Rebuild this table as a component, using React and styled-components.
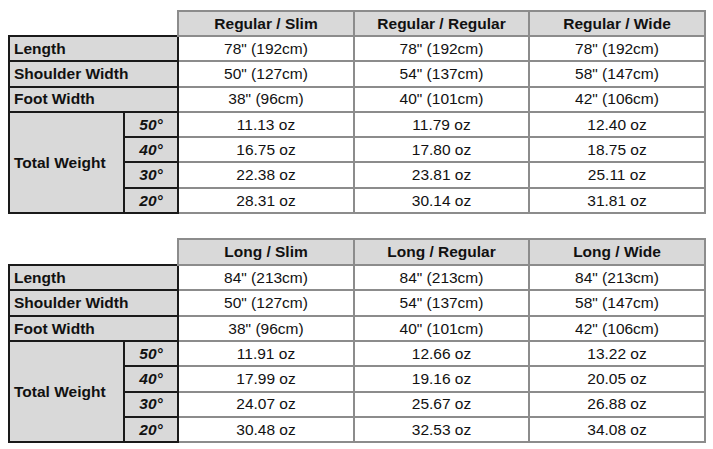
import React from 'react'
import styled, { createGlobalStyle } from 'styled-components'

const GlobalStyle = createGlobalStyle`
  html, body {
    margin: 0;
    padding: 0;
    background: #ffffff;
  }
  body {
    font-family: "Liberation Sans", Arial, sans-serif;
    color: #111;
  }
`

const tables = [
    {
        columns: ['Regular / Slim', 'Regular / Regular', 'Regular / Wide'],
        length: ['78" (192cm)', '78" (192cm)', '78" (192cm)'],
        shoulder: ['50" (127cm)', '54" (137cm)', '58" (147cm)'],
        foot: ['38" (96cm)', '40" (101cm)', '42" (106cm)'],
        weights: [
            ['50°', '11.13 oz', '11.79 oz', '12.40 oz'],
            ['40°', '16.75 oz', '17.80 oz', '18.75 oz'],
            ['30°', '22.38 oz', '23.81 oz', '25.11 oz'],
            ['20°', '28.31 oz', '30.14 oz', '31.81 oz'],
        ],
    },
    {
        columns: ['Long / Slim', 'Long / Regular', 'Long / Wide'],
        length: ['84" (213cm)', '84" (213cm)', '84" (213cm)'],
        shoulder: ['50" (127cm)', '54" (137cm)', '58" (147cm)'],
        foot: ['38" (96cm)', '40" (101cm)', '42" (106cm)'],
        weights: [
            ['50°', '11.91 oz', '12.66 oz', '13.22 oz'],
            ['40°', '17.99 oz', '19.16 oz', '20.05 oz'],
            ['30°', '24.07 oz', '25.67 oz', '26.88 oz'],
            ['20°', '30.48 oz', '32.53 oz', '34.08 oz'],
        ],
    },
]

const SizeTable = ({ data, headHeight }) => {
    return (
        <Table>
            <colgroup>
                <col style={{ width: 115 }} />
                <col style={{ width: 54 }} />
                <col style={{ width: 176 }} />
                <col style={{ width: 175 }} />
                <col style={{ width: 176 }} />
            </colgroup>
            <thead>
                <Row $height={headHeight}>
                    <Blank colSpan={2}></Blank>
                    {data.columns.map((c) => (
                        <HeadCell key={c}>{c}</HeadCell>
                    ))}
                </Row>
            </thead>
            <tbody>
                <Row>
                    <LabelCell colSpan={2}>Length</LabelCell>
                    {data.length.map((v, i) => <DataCell key={i}>{v}</DataCell>)}
                </Row>
                <Row>
                    <LabelCell colSpan={2}>Shoulder Width</LabelCell>
                    {data.shoulder.map((v, i) => <DataCell key={i}>{v}</DataCell>)}
                </Row>
                <Row>
                    <LabelCell colSpan={2}>Foot Width</LabelCell>
                    {data.foot.map((v, i) => <DataCell key={i}>{v}</DataCell>)}
                </Row>
                {data.weights.map((w, idx) => (
                    <Row key={w[0]}>
                        {idx === 0 && <LabelCell rowSpan={4}>Total Weight</LabelCell>}
                        <DegreeCell>{w[0]}</DegreeCell>
                        <DataCell>{w[1]}</DataCell>
                        <DataCell>{w[2]}</DataCell>
                        <DataCell>{w[3]}</DataCell>
                    </Row>
                ))}
            </tbody>
        </Table>
    )
}

const App = () => {
    return (
        <>
            <GlobalStyle />
            <Page>
                <SizeTable data={tables[0]} headHeight={25} />
                <SizeTable data={tables[1]} headHeight={26} />
            </Page>
        </>
    )
}

const Page = styled.div`
    display: flex;
    flex-direction: column;
    gap: 24px;
    padding: 10px 0 0 8px;
`
const Table = styled.table`
    border-collapse: collapse;
    table-layout: fixed;
    width: 696px;
    font-size: 15.5px;
`
const Row = styled.tr`
    height: ${(p) => p.$height || 25.3}px;
`
const Blank = styled.th`
    border: none;
    padding: 0;
`
const HeadCell = styled.th`
    background: #d9d9d9;
    border: 2px solid #8c8c8c;
    font-weight: bold;
    text-align: center;
    padding: 0;
    line-height: 1;
`
const LabelCell = styled.td`
    background: #d9d9d9;
    border: 2px solid #1a1a1a;
    font-weight: bold;
    text-align: left;
    padding: 0 0 0 4px;
    line-height: 1;
`
const DegreeCell = styled.td`
    background: #d9d9d9;
    border: 2px solid #1a1a1a;
    font-weight: bold;
    font-style: italic;
    text-align: center;
    padding: 0;
    line-height: 1;
`
const DataCell = styled.td`
    background: #ffffff;
    border: 2px solid #8c8c8c;
    text-align: center;
    padding: 0;
    line-height: 1;
`

export default App
